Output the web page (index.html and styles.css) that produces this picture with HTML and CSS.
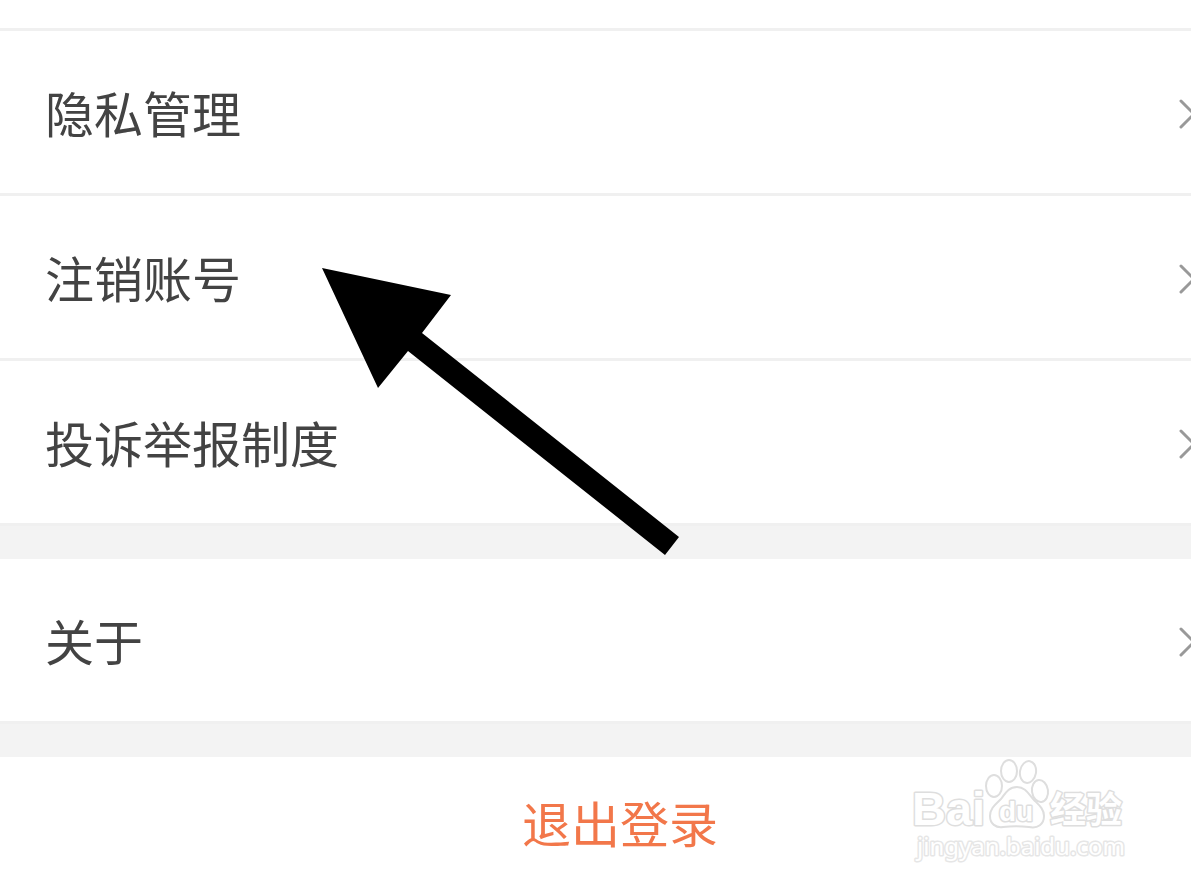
FILE: index.html
```html
<!DOCTYPE html>
<html lang="zh-CN">
<head>
    <meta charset="UTF-8">
    <meta name="viewport" content="width=device-width, initial-scale=1.0">
    <title>设置</title>
    <link rel="stylesheet" href="styles.css">
</head>
<body>
    <main class="settings">
        <div class="row-end"></div>
        <nav class="group">
            <a class="row" href="#privacy">
                <span>隐私管理</span>
                <svg class="chevron" viewBox="0 0 20 40"><path d="M5 9 L18 22 L5 35"/></svg>
            </a>
            <a class="row" href="#cancel">
                <span>注销账号</span>
                <svg class="chevron" viewBox="0 0 20 40"><path d="M5 9 L18 22 L5 35"/></svg>
            </a>
            <a class="row" href="#report">
                <span>投诉举报制度</span>
                <svg class="chevron" viewBox="0 0 20 40"><path d="M5 9 L18 22 L5 35"/></svg>
            </a>
        </nav>
        <nav class="group">
            <a class="row" href="#about">
                <span>关于</span>
                <svg class="chevron" viewBox="0 0 20 40"><path d="M5 9 L18 22 L5 35"/></svg>
            </a>
        </nav>
        <button class="logout" type="button">退出登录</button>

        <svg class="arrow" viewBox="0 0 358 288">
            <path d="M0 0 L129 27 L100 65 L357 269 L343 287 L86 83 L56 120 Z"/>
        </svg>

        <svg class="watermark" viewBox="0 0 240 115">
            <text class="wm-bai" x="12" y="70">Bai</text>
            <g class="wm-paw">
                <ellipse cx="109" cy="16" rx="8" ry="11"/>
                <ellipse cx="128" cy="17" rx="8" ry="11" transform="rotate(10 128 17)"/>
                <ellipse cx="94" cy="31" rx="8" ry="11"/>
                <ellipse cx="140" cy="36" rx="8" ry="11" transform="rotate(-8 140 36)"/>
                <path d="M117 32 C108 32 105 39 101 44 C96 49 90 53 90 61 C90 69 96 73 103 72 C111 71 121 71 129 72 C138 74 144 69 144 61 C144 54 139 50 134 45 C129 40 126 32 117 32 Z"/>
            </g>
            <text class="wm-du" x="99" y="66">du</text>
            <text class="wm-cn" x="150" y="68">经验</text>
            <text class="wm-url" x="17" y="100">jingyan.baidu.com</text>
        </svg>
    </main>
</body>
</html>
```
FILE: styles.css
```css
body {
    margin: 0;
    background: #fff;
    color: #434343;
    font-family: "Noto Sans CJK SC", sans-serif;
    overflow-x: hidden;
}
.settings {
    position: relative;
    overflow: hidden;
}
.row-end {
    height: 28px;
    border-bottom: 3px solid #f0f0f0;
}
.group {
    border-bottom: 33px solid #f3f3f3;
}
.row {
    display: flex;
    align-items: center;
    justify-content: space-between;
    height: 162px;
    padding-left: 45px;
    border-bottom: 3px solid #f0f0f0;
    color: inherit;
    font-size: 49px;
    line-height: 70px;
    text-decoration: none;
}
.chevron {
    flex: none;
    width: 20px;
    height: 40px;
    margin-right: -5px;
    fill: none;
    stroke: #999;
    stroke-width: 3;
    stroke-linecap: round;
}
.logout {
    display: block;
    width: 100%;
    height: 130px;
    padding: 0 0 0 49px;
    border: 0;
    background: #fff;
    color: #f2774a;
    font-family: inherit;
    font-size: 49px;
    line-height: 70px;
}
.arrow {
    position: absolute;
    left: 322px;
    top: 268px;
    width: 358px;
    height: 288px;
}
.watermark {
    position: absolute;
    right: 51px;
    bottom: 17px;
    width: 240px;
    height: 115px;
    fill: #fff;
    stroke: #dedede;
    stroke-width: 2;
    stroke-linejoin: round;
}
.watermark text {
    stroke-width: 3;
    paint-order: stroke;
}
.wm-bai {
    font: bold 47px "Liberation Sans", sans-serif;
}
.wm-du {
    font: bold 28px "Liberation Sans", sans-serif;
}
.wm-cn {
    font: bold 36px "Noto Sans CJK SC", sans-serif;
}
.wm-url {
    font: 24px "Noto Sans", sans-serif;
    stroke: #e6e6e6;
}
```
